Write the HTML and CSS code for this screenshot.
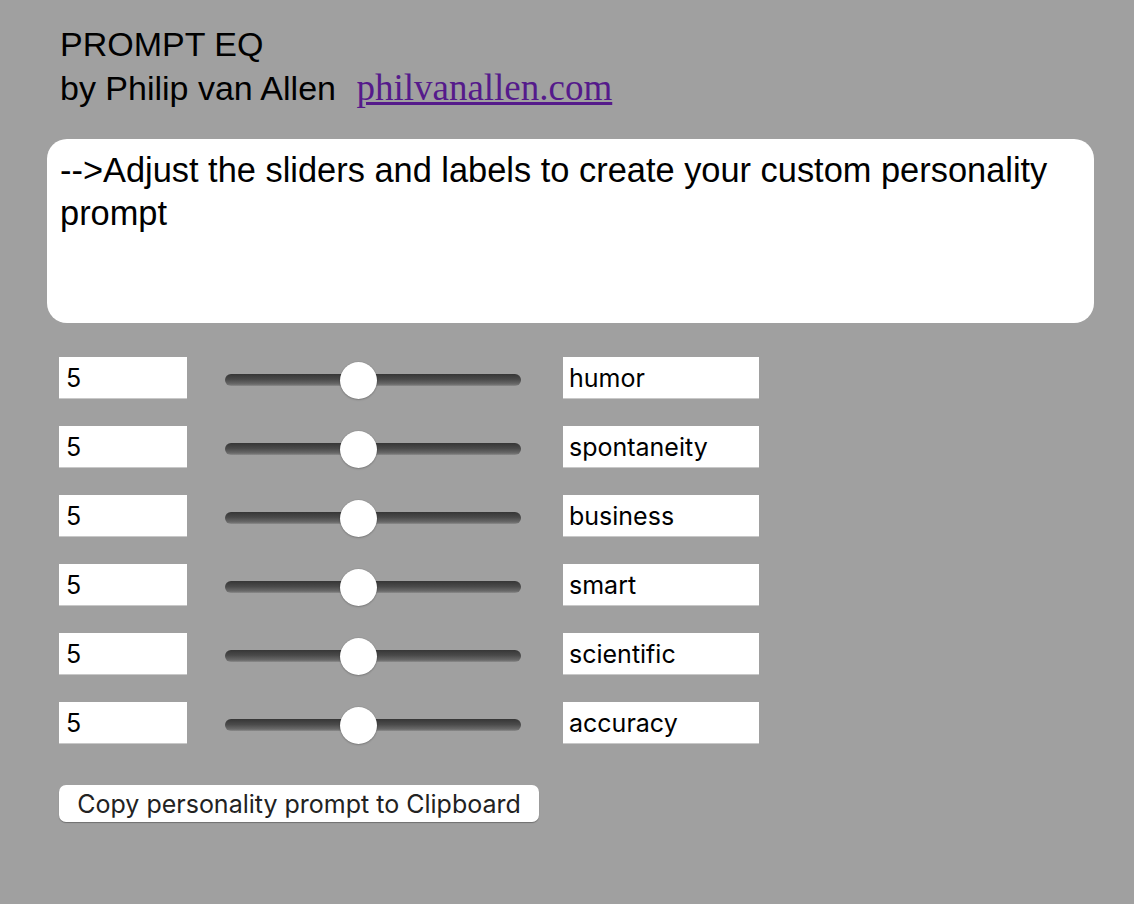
FILE: index.html
```html
<!DOCTYPE html>
<html>
<head>
<meta charset="utf-8">
<title>PROMPT EQ</title>
<link rel="stylesheet" href="styles.css">
</head>
<body>
<div class="page">
  <header class="header">
    <div class="title">PROMPT EQ</div>
    <div class="byline">by Philip van Allen <a class="site-link" href="#">philvanallen.com</a></div>
  </header>
  <div class="prompt-box">--&gt;Adjust the sliders and labels to create your custom personality prompt</div>
  <div class="rows">
    <div class="row">
      <input class="value-field" type="text" value="5">
      <input class="slider" type="range" min="1" max="10" value="5">
      <input class="label-field" type="text" value="humor">
    </div>
    <div class="row">
      <input class="value-field" type="text" value="5">
      <input class="slider" type="range" min="1" max="10" value="5">
      <input class="label-field" type="text" value="spontaneity">
    </div>
    <div class="row">
      <input class="value-field" type="text" value="5">
      <input class="slider" type="range" min="1" max="10" value="5">
      <input class="label-field" type="text" value="business">
    </div>
    <div class="row">
      <input class="value-field" type="text" value="5">
      <input class="slider" type="range" min="1" max="10" value="5">
      <input class="label-field" type="text" value="smart">
    </div>
    <div class="row">
      <input class="value-field" type="text" value="5">
      <input class="slider" type="range" min="1" max="10" value="5">
      <input class="label-field" type="text" value="scientific">
    </div>
    <div class="row">
      <input class="value-field" type="text" value="5">
      <input class="slider" type="range" min="1" max="10" value="5">
      <input class="label-field" type="text" value="accuracy">
    </div>
  </div>
  <button class="copy-btn" type="button">Copy personality prompt to Clipboard</button>
</div>
</body>
</html>
```
FILE: styles.css
```css
html, body {
  margin: 0;
  padding: 0;
  background: #a0a0a0;
}

body {
  font-family: "Liberation Sans", Arial, sans-serif;
  color: #000;
}

.page {
  padding: 23px 40px 40px 60px;
}

.header {
  font-size: 34px;
  line-height: 43px;
}

.title,
.byline {
  white-space: nowrap;
}

.site-link {
  font-family: "Liberation Serif", "Times New Roman", serif;
  font-size: 37px;
  color: #551a8b;
  text-decoration: underline;
  margin-left: 11px;
}

.prompt-box {
  margin: 29px 0 0 -13px;
  width: 1047px;
  height: 184px;
  box-sizing: border-box;
  background: #fff;
  border-radius: 20px;
  padding: 10px 13px;
  font-size: 34.4px;
  line-height: 43px;
}

.rows {
  margin-top: 34px;
  margin-left: -1px;
  display: flex;
  flex-direction: column;
  gap: 27px;
}

.row {
  display: flex;
  align-items: center;
  height: 42px;
}

.value-field,
.label-field {
  box-sizing: border-box;
  height: 42px;
  border: none;
  border-bottom: 1px solid #c8c8c8;
  background: #fff;
  font-family: Inter, "Liberation Sans", sans-serif;
  font-size: 25px;
  color: #000;
  padding: 0 7px;
  margin: 0;
  outline: none;
}

.value-field {
  width: 128px;
}

.label-field {
  width: 196px;
  margin-left: 42px;
  padding: 0 6px;
}

.slider {
  -webkit-appearance: none;
  appearance: none;
  width: 296px;
  height: 40px;
  margin: 0 0 0 38px;
  padding: 0;
  background: transparent;
  position: relative;
  top: 2px;
}

.slider::-webkit-slider-runnable-track {
  height: 12px;
  border-radius: 6px;
  background: linear-gradient(#363636, #4a4a4a 45%, #6a6a6a 85%, #8c8c8c);
}

.slider::-webkit-slider-thumb {
  -webkit-appearance: none;
  appearance: none;
  width: 37px;
  height: 37px;
  border-radius: 50%;
  background: #fff;
  margin-top: -12.5px;
  box-shadow: 0 0 1px rgba(0, 0, 0, 0.35), 0 1px 2px rgba(0, 0, 0, 0.2);
}

.copy-btn {
  display: block;
  margin: 41px 0 0 -1px;
  width: 480px;
  height: 37px;
  background: #fff;
  border: none;
  border-radius: 7px;
  box-shadow: 0 1px 1px rgba(0, 0, 0, 0.3);
  font-family: Inter, "Liberation Sans", sans-serif;
  font-size: 25px;
  color: #222;
  padding: 0;
  cursor: pointer;
}
```
